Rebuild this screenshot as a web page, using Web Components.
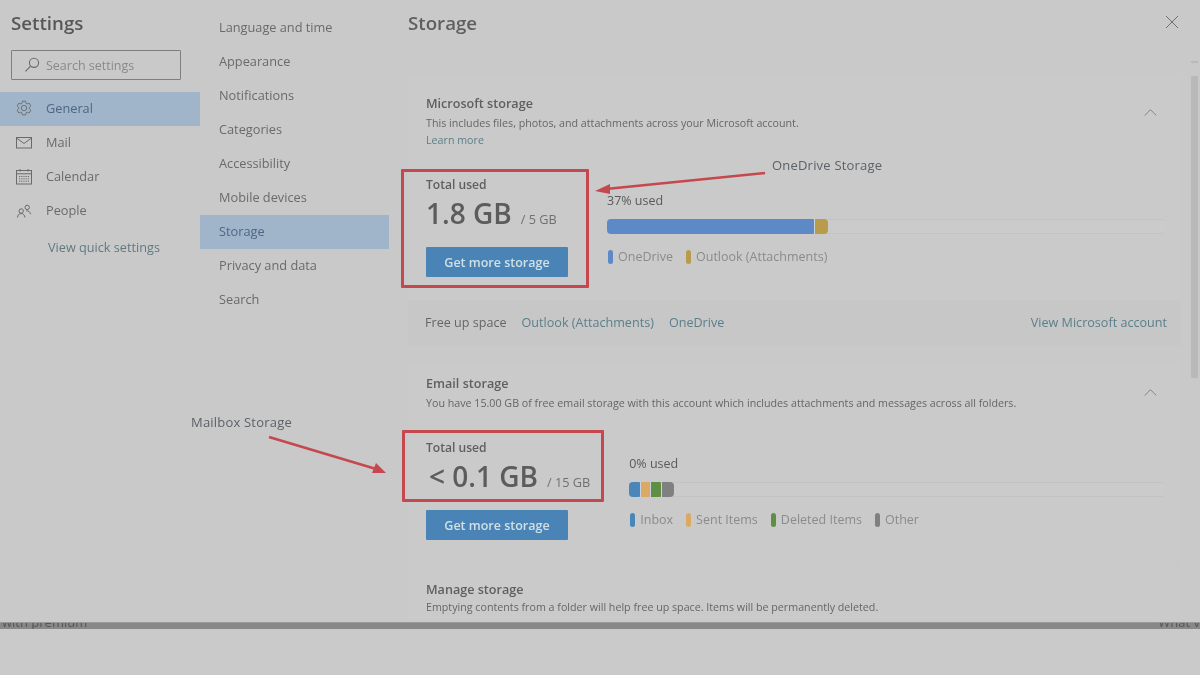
<!DOCTYPE html>
<html lang="en">
<head>
<meta charset="utf-8">
<title>Settings - Storage</title>
<style>
html,body{margin:0;padding:0;width:1200px;height:675px;overflow:hidden;background:#cacaca}
body{font-family:"Open Sans","Noto Sans",sans-serif;color:#5c5c5c;position:relative}
</style>
</head>
<body>
<settings-app></settings-app>
<script>
const def=(name,html)=>customElements.define(name,class extends HTMLElement{
  constructor(){super();this.attachShadow({mode:'open'});if(typeof html!=='function')this.shadowRoot.innerHTML=html;}
  connectedCallback(){if(typeof html==='function')this.shadowRoot.innerHTML=html(this);}
});
const ICONS={
 gear:'<g transform="translate(1 .9) scale(.9)"><path d="M8.2 1.5h3.6l.5 2.3 1.3.7 2.2-.8 1.8 3.1-1.7 1.6v1.4l1.7 1.6-1.8 3.1-2.2-.8-1.3.7-.5 2.3H8.2l-.5-2.3-1.3-.7-2.2.8-1.8-3.1 1.7-1.6V8.4L2.4 6.8l1.8-3.1 2.2.8 1.3-.7z"/><circle cx="10" cy="9.1" r="3"/></g>',
 mail:'<rect x="2.5" y="4.5" width="15" height="10.5"/><path d="M2.5 5l7.5 5.5L17.5 5"/>',
 calendar:'<rect x="2.5" y="3.5" width="15" height="13.5"/><path d="M2.5 6.8h15M6 2v2.5M14 2v2.5"/><path stroke-dasharray="1.2 1" d="M5 9.5h10M5 11.8h10M5 14.2h10"/>',
 people:'<circle cx="7.2" cy="10" r="2.2"/><path d="M3.5 16.5c.2-2.4 1.6-4 3.7-4s3.5 1.6 3.7 4"/><circle cx="13.2" cy="6.4" r="2.2"/><path d="M12.2 9.8c2.2-.3 4 1 4.3 3.4"/>',
};
def('nav-icon',h=>`<style>:host{display:inline-flex;width:20px;height:20px;flex:none}svg{width:20px;height:20px;fill:none;stroke:#6a6a6a;stroke-width:1}</style><svg viewBox="0 0 20 20">${ICONS[h.getAttribute('name')]||''}</svg>`);

def('nav-row',h=>{const sel=h.hasAttribute('selected');const ic=h.getAttribute('icon');return `<style>
:host{display:flex;align-items:center;height:34px;font-size:12.75px;color:${sel?'#4d6684':'#6a6a6a'};background:${sel?'#a0b5ca':'transparent'};box-sizing:border-box;padding-left:${ic?'14px':'19px'};white-space:nowrap}
nav-icon{margin-right:12px}
span{display:block;margin-top:-2px}
</style>${ic?`<nav-icon name="${ic}"></nav-icon>`:''}<span><slot></slot></span>`});

def('search-box',`<style>
:host{display:flex;align-items:center;box-sizing:border-box;width:170px;height:30px;margin-left:11px;border:1px solid #7f7f7f;border-radius:1px;font-size:12.5px;color:#8a8a8a;padding-left:11px}
svg{width:18px;height:18px;fill:none;stroke:#6a6a6a;stroke-width:1.1;margin-right:5px;flex:none}
</style><svg viewBox="0 0 18 18"><circle cx="11" cy="6.8" r="4.6"/><path d="M7.6 10.1L2.5 15.4"/></svg><slot></slot>`);

def('main-nav',`<style>
:host{display:flex;flex-direction:column;width:200px;flex:none}
h1{margin:0;padding:9px 0 0 11px;box-sizing:border-box;font-size:18.7px;line-height:27px;font-weight:600;color:#575757;height:50px}
.rows{margin-top:12px;display:flex;flex-direction:column}
.quick{height:38px;display:flex;align-items:center;padding-left:48px;padding-bottom:1px;box-sizing:border-box;font-size:12.7px;color:#5f7a80}
</style><h1>Settings</h1><search-box>Search settings</search-box>
<div class="rows"><nav-row icon="gear" selected>General</nav-row><nav-row icon="mail">Mail</nav-row><nav-row icon="calendar">Calendar</nav-row><nav-row icon="people">People</nav-row></div>
<div class="quick">View quick settings</div>`);

def('sub-nav',`<style>:host{display:flex;flex-direction:column;width:189px;flex:none;padding-top:11px;box-sizing:content-box}</style>
<nav-row>Language and time</nav-row><nav-row>Appearance</nav-row><nav-row>Notifications</nav-row><nav-row>Categories</nav-row><nav-row>Accessibility</nav-row><nav-row>Mobile devices</nav-row><nav-row selected>Storage</nav-row><nav-row>Privacy and data</nav-row><nav-row>Search</nav-row>`);

def('chevron-up',`<style>:host{display:block;width:13px;height:7px}svg{display:block;width:13px;height:7px;fill:none;stroke:#858585;stroke-width:1}</style><svg viewBox="0 0 13 7"><path d="M.7 6.5l5.8-5.8 5.8 5.8"/></svg>`);

def('card-head',h=>`<style>
:host{display:flex;justify-content:space-between;align-items:flex-start;padding-right:9px}
h2{margin:0;padding-top:1px;font-size:12.6px;line-height:18px;font-weight:600;color:#5f5f5f}
.d{font-size:10.7px;line-height:16px;color:#666;margin-top:${h.hasAttribute('tight')?0:2}px;white-space:nowrap}
.l{font-size:10.7px;line-height:17px;color:#5a8088;margin-top:1px}
chevron-up{margin-top:15px}
</style><div><h2>${h.getAttribute('title')}</h2><div class="d">${h.getAttribute('desc')}</div>${h.hasAttribute('link')?`<div class="l">${h.getAttribute('link')}</div>`:''}</div>${h.hasAttribute('nochev')?'':'<chevron-up></chevron-up>'}`);

def('usage-total',h=>`<style>
:host{display:block;flex:none}
.t{font-size:12.1px;line-height:18px;font-weight:600;color:#5f5f5f}
.v{display:flex;align-items:baseline;height:34px;line-height:34px;margin-top:2px;white-space:nowrap}
b{font-size:28px;font-weight:600;color:#5c5c5c;${h.hasAttribute('wide')?'padding-left:3px':''}}
i{font-style:normal;font-size:12.7px;color:#707070;margin-left:9px}
button{display:block;width:142px;height:30px;margin-top:17px;border:0;border-radius:1px;padding:0;background:#4a84b6;color:#cfe0e6;font:600 12.5px "Open Sans",sans-serif}
</style><div class="t">Total used</div><div class="v"><b>${h.getAttribute('value')}</b><i>${h.getAttribute('of')}</i></div><button>Get more storage</button>`);

def('legend-item',h=>`<style>
:host{display:inline-flex;align-items:center;font-size:12.5px;line-height:16px;color:#8b8b8b;white-space:nowrap}
u{display:block;width:5px;height:14px;border-radius:2.5px;background:${h.getAttribute('color')};margin-right:5px}
</style><u></u><slot></slot>`);

def('usage-bar',h=>{
 const segs=JSON.parse(h.getAttribute('segs'));
 const leg=JSON.parse(h.getAttribute('legend'));
 return `<style>
:host{display:block;flex:1;min-width:0;padding-top:17px}
.p{font-size:12.5px;line-height:16px;color:#5a5a5a}
.track{display:flex;height:15px;margin-top:10px;background:#cbcbcb;border:solid #c3c3c3;border-width:1px 0;border-radius:3px;box-sizing:border-box;align-items:center;margin-right:1px}
.s{height:15px;flex:none;border-radius:4px}
.s+.s{margin-left:-2px;border-radius:0 4px 4px 0;border-left:1px solid #c9d3dd}
.leg{display:flex;gap:13px;margin-top:15px;padding-left:1px}
</style><div class="p">${h.getAttribute('used')}</div><div class="track">${segs.map(s=>`<div class="s" style="width:${s[0]}px;background:${s[1]}"></div>`).join('')}</div>
<div class="leg">${leg.map(l=>`<legend-item color="${l[1]}">${l[0]}</legend-item>`).join('')}</div>`});

def('usage-row',h=>`<style>:host{display:flex;gap:39px;margin-top:${h.getAttribute('top')||27}px}</style><slot></slot>`);

def('storage-card',h=>`<style>
:host{display:block;background:#cacaca}
.b{padding:${h.getAttribute('pad')||'16px 15px 23px 18px'}}
</style><div class="b"><slot></slot></div><slot name="foot"></slot>`);

def('card-footer',`<style>
:host{display:flex;align-items:center;height:46px;background:#c7c7c7;box-sizing:border-box;padding:0 14px 2px 17px;font-size:12.6px;color:#666;white-space:nowrap}
a{color:#5a7f8a;text-decoration:none;margin-left:15px}
.r{margin-left:auto}
</style><span>Free up space</span><a>Outlook (Attachments)</a><a>OneDrive</a><a class="r">View Microsoft account</a>`);

def('scroll-bar',`<style>
:host{display:flex;flex-direction:column;align-items:center;width:9px;flex:none;margin-left:9px;padding-top:13px;box-sizing:content-box}
.up{width:7px;height:2px;background:#b9b9b9}
.th{width:7px;height:302px;margin-top:13px;background:#b9b9b9;border-radius:1px}
</style><div class="up"></div><div class="th"></div>`);

def('storage-pane',`<style>
:host{display:flex;flex-direction:column;flex:1;min-width:0;padding-left:19px;height:622px;overflow:hidden}
header{display:flex;justify-content:space-between;align-items:center;height:48px;padding-right:21px;flex:none}
h1{margin:0;font-size:18.7px;font-weight:600;color:#5f5f5f;margin-top:-3px}
header svg{width:14px;height:14px;stroke:#6f6f6f;stroke-width:1;fill:none;margin-top:-4px}
.body{display:flex;flex:1;min-height:0;padding-right:3px}
.cards{display:flex;flex-direction:column;width:773px;flex:none;padding-top:30px;gap:16px;overflow:hidden}
.third{margin-top:-8px}
</style>
<header><h1>Storage</h1><svg viewBox="0 0 14 14"><path d="M1 1l12 12M13 1L1 13"/></svg></header>
<div class="body"><div class="cards">
<storage-card>
 <card-head title="Microsoft storage" desc="This includes files, photos, and attachments across your Microsoft account." link="Learn more"></card-head>
 <usage-row><usage-total value="1.8 GB" of="/ 5 GB"></usage-total>
 <usage-bar used="37% used" segs='[[209,"#5d8ac6"],[13,"#b89b4c"]]' legend='[["OneDrive","#5d8ac6"],["Outlook (Attachments)","#b89b4c"]]'></usage-bar></usage-row>
 <card-footer slot="foot"></card-footer>
</storage-card>
<storage-card pad="12px 15px 21px 18px">
 <card-head title="Email storage" desc="You have 15.00 GB of free email storage with this account which includes attachments and messages across all folders."></card-head>
 <usage-row top="28"><usage-total wide value="&lt; 0.1 GB" of="/ 15 GB"></usage-total>
 <usage-bar used="0% used" segs='[[13,"#4a86ba"],[11,"#dba964"],[12,"#5f8f45"],[12,"#808080"]]' legend='[["Inbox","#4a86ba"],["Sent Items","#dba964"],["Deleted Items","#5f8f45"],["Other","#808080"]]'></usage-bar></usage-row>
</storage-card>
<storage-card class="third" pad="11px 15px 10px 18px">
 <card-head nochev tight title="Manage storage" desc="Emptying contents from a folder will help free up space. Items will be permanently deleted."></card-head>
</storage-card>
</div><scroll-bar></scroll-bar></div>`);

def('bottom-strip',`<style>
:host{display:flex;justify-content:space-between;height:7px;background:#888;overflow:hidden;font-size:13px;line-height:7px;color:#555;padding:0 0 0 2px;border-top:1px solid #9a9a9a;box-sizing:border-box}
span{display:block;margin-top:-4px}
</style><span>with premium</span><span>What v</span>`);

def('note-box',h=>`<style>:host{position:absolute;left:${h.getAttribute('x')}px;top:${h.getAttribute('y')}px;width:${h.getAttribute('w')}px;height:${h.getAttribute('h')}px;box-sizing:border-box;border:3px solid #c5484e;border-radius:1px}</style>`);
def('note-label',h=>`<style>:host{position:absolute;left:${h.getAttribute('x')}px;top:${h.getAttribute('y')}px;font:13px/18px "Open Sans",sans-serif;color:#5c6268;white-space:nowrap;letter-spacing:.2px}</style><slot></slot>`);
def('note-arrow',h=>`<style>:host{position:absolute;left:0;top:0;pointer-events:none}svg{display:block}</style><svg width="1200" height="675" viewBox="0 0 1200 675"><line x1="${h.getAttribute('x1')}" y1="${h.getAttribute('y1')}" x2="${h.getAttribute('x2')}" y2="${h.getAttribute('y2')}" stroke="#c5484e" stroke-width="2.5"/><path d="${h.getAttribute('head')}" fill="#c5484e"/></svg>`);

def('settings-app',`<style>
:host{display:block;width:1200px;height:675px;position:relative;background:#cacaca;filter:blur(.3px)}
.top{display:flex;height:622px;background:#c9c9c9}
</style>
<div class="top"><main-nav></main-nav><sub-nav></sub-nav><storage-pane></storage-pane></div>
<bottom-strip></bottom-strip>
<note-box x="401" y="169" w="188" h="119"></note-box>
<note-box x="402" y="430" w="202" h="72"></note-box>
<note-label x="772" y="156">OneDrive Storage</note-label>
<note-label x="191" y="413">Mailbox Storage</note-label>
<note-arrow x1="765" y1="173" x2="606" y2="189" head="M595 191L610 184L610 194Z"></note-arrow>
<note-arrow x1="269" y1="437" x2="376" y2="469" head="M386 473L372 473L376 463Z"></note-arrow>`);
</script>
</body>
</html>
